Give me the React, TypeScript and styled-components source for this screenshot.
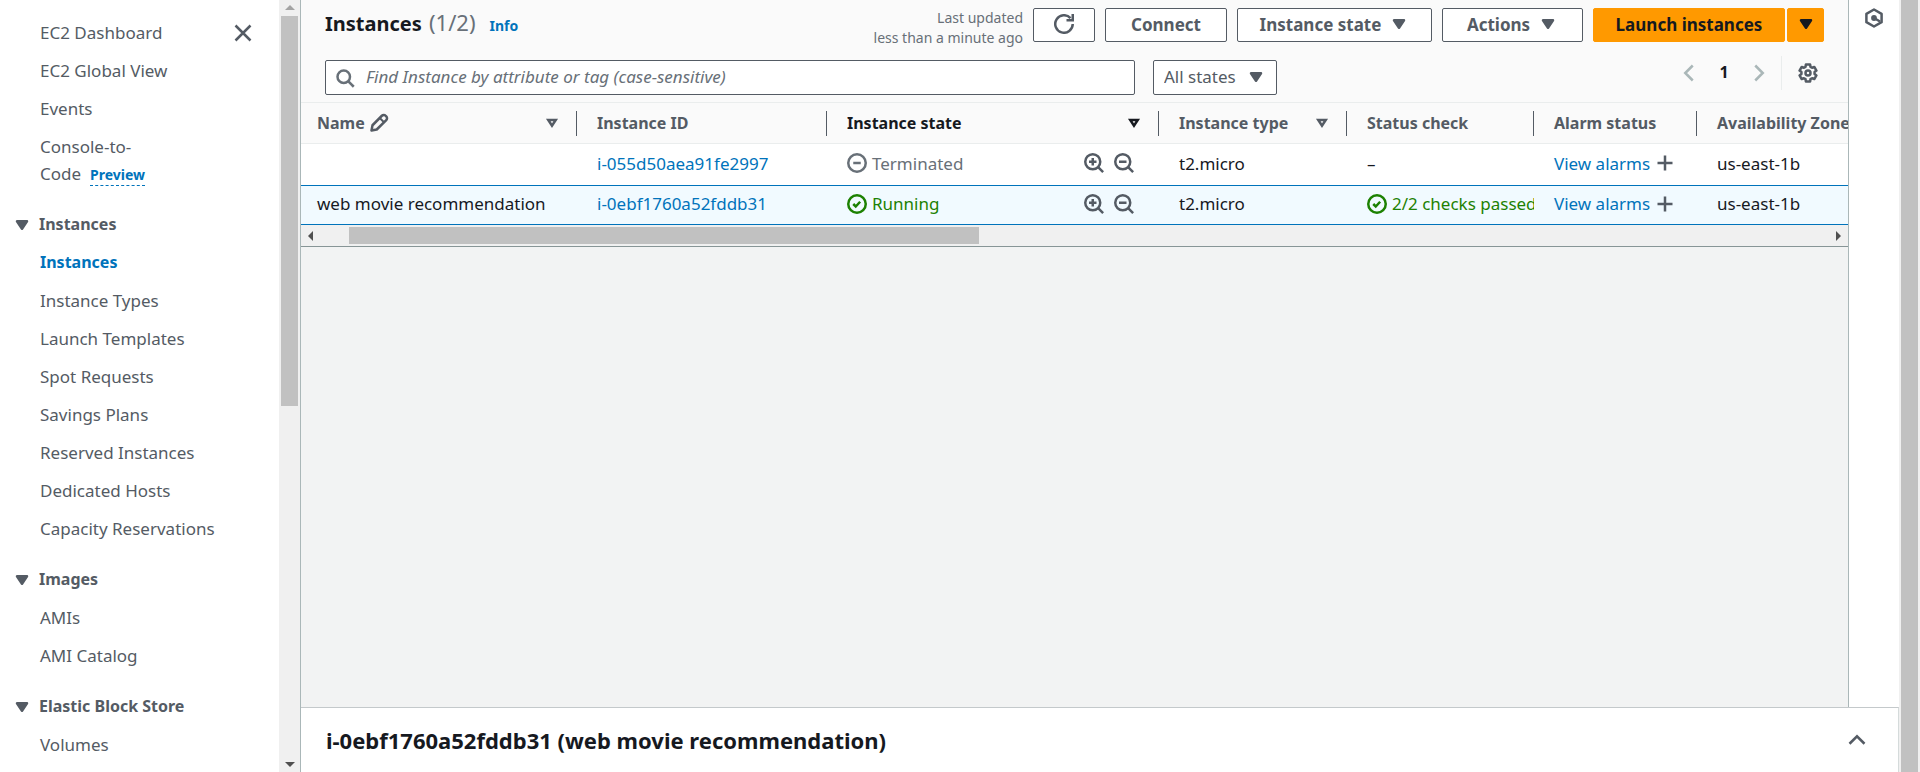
import React from "react";
import styled, { createGlobalStyle, css } from "styled-components";

const c = {
  text: "#16191f",
  label: "#545b64",
  muted: "#687078",
  link: "#0073bb",
  green: "#1d8102",
  line: "#eaeded",
  track: "#f0f0f0",
  thumb: "#c1c1c1",
};

const GlobalStyle = createGlobalStyle`
  *, *::before, *::after { box-sizing: border-box; }
  body {
    margin: 0;
    background: #fff;
    color: ${c.text};
    font-family: "Noto Sans", "Open Sans", sans-serif;
    font-size: 17px;
    line-height: 27px;
  }
  button, input, select { font: inherit; color: inherit; margin: 0; }
  button { cursor: pointer; }
  a { color: ${c.link}; text-decoration: none; }
  h1, h2, h3, ul, p { margin: 0; padding: 0; font-size: inherit; list-style: none; }
`;

/* ---------- icons ---------- */

const Svg = styled.svg<{ $size?: number }>`
  display: block;
  flex: none;
  width: ${(p) => p.$size ?? 20}px;
  height: ${(p) => p.$size ?? 20}px;
  fill: none;
  stroke: currentColor;
  stroke-width: 2;
`;

const Caret = () => (
  <Svg viewBox="0 0 16 16" aria-hidden="true">
    <path d="M4 5h8l-4 6z" fill="currentColor" strokeLinejoin="round" />
  </Svg>
);
const SortIcon = () => (
  <Svg viewBox="0 0 16 16" aria-hidden="true">
    <path d="M5 5.500h6l-3 4.600z" />
  </Svg>
);
const CloseIcon = () => (
  <Svg viewBox="0 0 16 16" aria-hidden="true">
    <path d="m2 2 12 12M14 2 2 14" />
  </Svg>
);
const RefreshIcon = () => (
  <Svg viewBox="0 0 16 16" aria-hidden="true">
    <path d="M10 5h5V0" />
    <path d="M15 8a7 7 0 1 1-1.800-4.700" />
  </Svg>
);
const SearchIcon = () => (
  <Svg viewBox="0 0 16 16" aria-hidden="true">
    <circle cx="7" cy="7" r="5" />
    <path d="m15 15-4.500-4.500" />
  </Svg>
);
const EditIcon = () => (
  <Svg viewBox="0 0 16 16" aria-hidden="true" strokeLinejoin="round">
    <path d="M2 14l.8-4.200 7.500-7.600a2.100 2.100 0 0 1 3 0l.5.5a2.100 2.100 0 0 1 0 3L6.200 13.200z" />
    <path d="m8.800 4.200 3 3" strokeWidth="1.500" />
  </Svg>
);
const ZoomIcon = ({ plus }: { plus?: boolean }) => (
  <Svg viewBox="0 0 16 16" aria-hidden="true">
    <circle cx="7" cy="7" r="6" />
    <path d="m11.300 11.300 4 4M4 7h6" />
    {plus && <path d="M7 4v6" />}
  </Svg>
);
const StoppedIcon = () => (
  <Svg viewBox="0 0 16 16" aria-hidden="true">
    <circle cx="8" cy="8" r="7" />
    <path d="M11 8H5" />
  </Svg>
);
const SuccessIcon = () => (
  <Svg viewBox="0 0 16 16" aria-hidden="true">
    <circle cx="8" cy="8" r="7" />
    <path d="m5 8 2 2 3.500-3.800" />
  </Svg>
);
const PlusIcon = () => (
  <Svg viewBox="0 0 16 16" aria-hidden="true">
    <path d="M8 2v12M2 8h12" />
  </Svg>
);
const Angle = ({ d }: { d: string }) => (
  <Svg viewBox="0 0 16 16" aria-hidden="true">
    <path d={d} />
  </Svg>
);

/* Outline of a gear with six teeth, the first one pointing up. */
const gearPoints = [0, 60, 120, 180, 240, 300]
  .flatMap((tooth) =>
    [[-14, 7], [14, 7], [22, 5.3], [38, 5.3]].map(([offset, radius]) => {
      const a = ((tooth + offset - 90) * Math.PI) / 180;
      return `${(8 + radius * Math.cos(a)).toFixed(2)},${(8 + radius * Math.sin(a)).toFixed(2)}`;
    })
  )
  .join(" ");

const GearIcon = () => (
  <Svg viewBox="0 0 16 16" aria-hidden="true" strokeLinejoin="round">
    <polygon points={gearPoints} />
    <circle cx="8" cy="8" r="2" />
  </Svg>
);
const HexIcon = () => (
  <Svg viewBox="0 0 20 20" aria-hidden="true" strokeLinejoin="round">
    <g strokeWidth="2.500">
      <path d="M10 1.500 17.600 5.800v8.400L10 18.500l-7.600-4.300V5.800z" />
      <path d="m10 10 6 3.500" />
    </g>
    <circle cx="10" cy="10" r="2.900" fill="currentColor" stroke="none" />
  </Svg>
);
const Arrow = ({ dir, color = "#505050" }: { dir: "up" | "down" | "left" | "right"; color?: string }) => {
  const d = { up: "M0 7 5 2l5 5z", down: "M0 3h10L5 8z", left: "M7 0v10L2 5z", right: "M3 0v10l5-5z" }[dir];
  return (
    <Svg $size={10} viewBox="0 0 10 10" aria-hidden="true">
      <path d={d} fill={color} stroke="none" />
    </Svg>
  );
};

/* ---------- frame ---------- */

const Shell = styled.div`
  display: flex;
  min-height: 100vh;
`;
const Sidebar = styled.nav`
  flex: none;
  width: 279px;
  padding: 19px 26px 14px 15px;
  display: flex;
  align-items: flex-start;
  justify-content: space-between;
  color: ${c.label};
`;
const VScroll = styled.div`
  flex: none;
  width: 21px;
  padding: 0 2px;
  background: ${c.track};
  display: flex;
  flex-direction: column;
  align-items: center;
`;
const VCap = styled.div`
  height: 16px;
  display: flex;
  align-items: center;
`;
const VTrack = styled.div`
  flex: 1;
  width: 100%;
`;
const VThumb = styled.div<{ $h: string }>`
  height: ${(p) => p.$h};
  background: ${c.thumb};
`;
const Center = styled.div`
  flex: 1;
  min-width: 0;
  display: flex;
  flex-direction: column;
  border-left: 1px solid #aab7b8;
`;
const Upper = styled.div`
  flex: 1;
  display: flex;
`;
const Main = styled.main`
  flex: 1;
  min-width: 0;
  background: #f2f3f3;
`;
const Rail = styled.aside`
  flex: none;
  width: 51px;
  padding: 8px 15px;
  border-left: 1px solid #aab7b8;
  color: ${c.label};
`;
const IconButton = styled.button<{ $tone?: string }>`
  padding: 0;
  border: 0;
  background: none;
  color: ${(p) => p.$tone ?? c.label};
`;

/* ---------- navigation ---------- */

const NavList = styled.ul`
  display: flex;
  flex-direction: column;
  gap: 11px;
  padding-left: 25px;
`;
const NavLink = styled.a<{ $active?: boolean }>`
  display: block;
  color: ${(p) => (p.$active ? c.link : c.label)};
  font-size: ${(p) => (p.$active ? 16 : 17)}px;
  font-weight: ${(p) => (p.$active ? 700 : 400)};
`;
const NavHeading = styled.h3`
  display: flex;
  align-items: center;
  margin: 24px 0 11px -3px;
  gap: 7px;
  font-size: 16px;
  font-weight: 700;
`;
const Preview = styled.span`
  display: inline-block;
  margin-left: 9px;
  color: ${c.link};
  font-size: 14px;
  font-weight: 700;
  line-height: 20px;
  border-bottom: 1px dashed ${c.link};
`;
const CloseWrap = styled.div`
  padding-top: 4px;
`;

const sections = [
  {
    title: "Instances",
    items: ["Instances", "Instance Types", "Launch Templates", "Spot Requests", "Savings Plans", "Reserved Instances", "Dedicated Hosts", "Capacity Reservations"],
  },
  { title: "Images", items: ["AMIs", "AMI Catalog"] },
  { title: "Elastic Block Store", items: ["Volumes"] },
];

/* ---------- toolbar ---------- */

const Header = styled.header`
  padding: 8px 24px 7px;
  background: #fafafa;
  border-bottom: 1px solid ${c.line};
`;
const TitleRow = styled.div`
  display: flex;
  align-items: center;
  gap: 10px;
`;
const Title = styled.h1`
  margin-right: auto;
  font-size: 20px;
  font-weight: 700;
  line-height: 24px;
  padding-bottom: 3px;
`;
const Count = styled.span`
  margin-left: 2px;
  color: ${c.muted};
  font-size: 22px;
  font-weight: 400;
`;
const Info = styled.a`
  margin-left: 14px;
  font-size: 14px;
`;
const Updated = styled.p`
  text-align: right;
  font-size: 14px;
  line-height: 20px;
  height: 34px;
  color: ${c.muted};
`;
const Button = styled.button<{ $w: number; $primary?: boolean }>`
  display: flex;
  align-items: center;
  justify-content: center;
  gap: 8px;
  width: ${(p) => p.$w}px;
  height: 34px;
  padding: 0 0 2px;
  border: 1px solid ${c.label};
  border-radius: 2px;
  background: #fff;
  color: ${c.label};
  font-weight: 700;
  white-space: nowrap;
  ${(p) =>
    p.$primary &&
    css`
      border-color: #ff9900;
      background: #ff9900;
      color: ${c.text};
    `}
`;
const Split = styled.div`
  display: flex;
  gap: 2px;
`;
const FilterRow = styled.div`
  display: flex;
  align-items: center;
  gap: 18px;
  margin-top: 18px;
`;
const SearchBox = styled.label`
  flex: 0 1 810px;
  display: flex;
  align-items: center;
  gap: 11px;
  height: 35px;
  padding: 0 9px;
  border: 1px solid ${c.label};
  border-radius: 2px;
  background: #fff;
  color: ${c.muted};
`;
const SearchInput = styled.input`
  flex: 1;
  min-width: 0;
  height: 31px;
  padding: 0 0 2px;
  border: 0;
  outline: 0;
  background: none;
  &::placeholder {
    color: ${c.muted};
    font-style: italic;
    opacity: 1;
  }
`;
const SelectBox = styled.div`
  display: grid;
  align-items: center;
  width: 124px;
  height: 35px;
  padding-bottom: 2px;
  border: 1px solid ${c.label};
  border-radius: 2px;
  background: #fff;
  color: ${c.label};
  > * {
    grid-area: 1 / 1;
  }
  > svg {
    justify-self: end;
    margin-right: 10px;
    pointer-events: none;
  }
`;
const Select = styled.select`
  appearance: none;
  width: 100%;
  height: 31px;
  padding: 0 36px 0 10px;
  border: 0;
  background: none;
`;
const Pager = styled.div`
  display: flex;
  align-items: center;
  align-self: flex-start;
  height: 35px;
  margin: -5px 6px 0 auto;
  gap: 16px;
`;
const PageNo = styled.span`
  width: 18px;
  text-align: center;
  font-size: 16px;
  font-weight: 700;
`;
const Divider = styled.span`
  width: 1px;
  height: 34px;
  background: ${c.line};
  margin-left: -4px;
`;

/* ---------- table ---------- */

const TableWrap = styled.div`
  overflow: hidden;
`;
const Table = styled.table`
  table-layout: fixed;
  width: 1636px;
  border-collapse: separate;
  border-spacing: 0;
  background: #fff;
`;
const Th = styled.th<{ $dark?: boolean }>`
  height: 41px;
  padding: 0;
  background: #fafafa;
  border-bottom: 1px solid ${c.line};
  color: ${(p) => (p.$dark ? c.text : c.label)};
  text-align: left;
  font-size: 16px;
  font-weight: 700;
  white-space: nowrap;
`;
const ThInner = styled.div<{ $first?: boolean }>`
  display: flex;
  align-items: center;
  justify-content: space-between;
  height: 25px;
  padding: 0 14px 0 ${(p) => (p.$first ? 16 : 20)}px;
  border-right: 1px solid ${c.label};
`;
const ThLabel = styled.span`
  display: flex;
  align-items: center;
  gap: 4px;
`;
const Tr = styled.tr<{ $selected?: boolean }>`
  td {
    height: 41px;
    padding: 0 0 3px 20px;
    white-space: nowrap;
    overflow: hidden;
  }
  td:first-child {
    padding-left: 16px;
  }
  ${(p) =>
    p.$selected &&
    css`
      td {
        height: 40px;
        background: #f1faff;
        border-top: 1px solid ${c.link};
        border-bottom: 1px solid ${c.link};
      }
    `}
`;
const Cell = styled.div<{ $tone?: string; $between?: boolean }>`
  display: flex;
  align-items: center;
  justify-content: ${(p) => (p.$between ? "space-between" : "flex-start")};
  gap: 5px;
  color: ${(p) => p.$tone ?? "inherit"};
`;
const ZoomPair = styled.div`
  display: flex;
  gap: 10px;
  padding-right: 25px;
`;
const HScroll = styled.div`
  display: flex;
  align-items: center;
  height: 22px;
  padding: 0 5px;
  background: ${c.track};
  border-bottom: 1px solid #879596;
`;
const HTrack = styled.div`
  flex: 1;
  padding-left: 33px;
`;
const HThumb = styled.div`
  width: calc(100% * 14 / 33);
  height: 17px;
  background: ${c.thumb};
`;

const columns = [
  { label: "Name", w: 276, sort: true, edit: true },
  { label: "Instance ID", w: 250 },
  { label: "Instance state", w: 332, sort: true, dark: true },
  { label: "Instance type", w: 188, sort: true },
  { label: "Status check", w: 187 },
  { label: "Alarm status", w: 163 },
  { label: "Availability Zone", w: 240 },
];
const rows = [
  { name: "", id: "i-055d50aea91fe2997", running: false },
  { name: "web movie recommendation", id: "i-0ebf1760a52fddb31", running: true },
];

/* ---------- details panel ---------- */

const Details = styled.section`
  display: flex;
  align-items: center;
  justify-content: space-between;
  height: 65px;
  padding: 0 31px 0 25px;
  border-top: 1px solid #c4c9cb;
  border-right: 1px solid #d5dbdb;
  background: #fff;
`;
const DetailsTitle = styled.h2`
  font-size: 22px;
  font-weight: 700;
`;

export default function App() {
  return (
    <>
      <GlobalStyle />
      <Shell>
        <Sidebar aria-label="EC2">
          <div>
            <NavList>
              <li><NavLink href="#">EC2 Dashboard</NavLink></li>
              <li><NavLink href="#">EC2 Global View</NavLink></li>
              <li><NavLink href="#">Events</NavLink></li>
              <li>
                <NavLink href="#">
                  Console-to-
                  <br />
                  Code<Preview>Preview</Preview>
                </NavLink>
              </li>
            </NavList>
            {sections.map((s) => (
              <div key={s.title}>
                <NavHeading><Caret />{s.title}</NavHeading>
                <NavList>
                  {s.items.map((item) => (
                    <li key={item}>
                      <NavLink href="#" $active={item === "Instances"}>{item}</NavLink>
                    </li>
                  ))}
                </NavList>
              </div>
            ))}
          </div>
          <CloseWrap><IconButton aria-label="Close navigation"><CloseIcon /></IconButton></CloseWrap>
        </Sidebar>
        <VScroll>
          <VCap><Arrow dir="up" color="#a3a3a3" /></VCap>
          <VTrack><VThumb $h="390px" /></VTrack>
          <VCap><Arrow dir="down" /></VCap>
        </VScroll>
        <Center>
          <Upper>
            <Main>
              <Header>
                <TitleRow>
                  <Title>
                    Instances <Count>(1/2)</Count>
                    <Info href="#">Info</Info>
                  </Title>
                  <Updated>Last updated<br />less than a minute ago</Updated>
                  <Button $w={62} aria-label="Refresh"><RefreshIcon /></Button>
                  <Button $w={122}>Connect</Button>
                  <Button $w={195}>Instance state <Caret /></Button>
                  <Button $w={141}>Actions <Caret /></Button>
                  <Split>
                    <Button $w={192} $primary>Launch instances</Button>
                    <Button $w={37} $primary aria-label="More launch options"><Caret /></Button>
                  </Split>
                </TitleRow>
                <FilterRow>
                  <SearchBox>
                    <SearchIcon />
                    <SearchInput type="text" aria-label="Find Instance" placeholder="Find Instance by attribute or tag (case-sensitive)" />
                  </SearchBox>
                  <SelectBox>
                    <Select aria-label="State filter"><option>All states</option></Select>
                    <Caret />
                  </SelectBox>
                  <Pager>
                    <IconButton $tone="#aab7b8" aria-label="Previous page"><Angle d="M11 2 5 8l6 6" /></IconButton>
                    <PageNo>1</PageNo>
                    <IconButton $tone="#aab7b8" aria-label="Next page"><Angle d="m5 2 6 6-6 6" /></IconButton>
                    <Divider />
                    <IconButton aria-label="Preferences"><GearIcon /></IconButton>
                  </Pager>
                </FilterRow>
              </Header>
              <TableWrap>
                <Table>
                  <colgroup>
                    {columns.map((col) => <col key={col.label} width={col.w} />)}
                  </colgroup>
                  <thead>
                    <tr>
                      {columns.map((col, i) => (
                        <Th key={col.label} $dark={col.dark} scope="col">
                          <ThInner $first={i === 0}>
                            <ThLabel>{col.label}{col.edit && <EditIcon />}</ThLabel>
                            {col.sort && <SortIcon />}
                          </ThInner>
                        </Th>
                      ))}
                    </tr>
                  </thead>
                  <tbody>
                    {rows.map((r) => (
                      <Tr key={r.id} $selected={r.running}>
                        <td>{r.name}</td>
                        <td><a href="#">{r.id}</a></td>
                        <td>
                          <Cell $between>
                            <Cell $tone={r.running ? c.green : c.muted}>
                              {r.running ? <SuccessIcon /> : <StoppedIcon />}
                              {r.running ? "Running" : "Terminated"}
                            </Cell>
                            <ZoomPair>
                              <IconButton aria-label="Include in filter"><ZoomIcon plus /></IconButton>
                              <IconButton aria-label="Exclude from filter"><ZoomIcon /></IconButton>
                            </ZoomPair>
                          </Cell>
                        </td>
                        <td>t2.micro</td>
                        <td>
                          {r.running ? <Cell $tone={c.green}><SuccessIcon />2/2 checks passed</Cell> : "–"}
                        </td>
                        <td>
                          <Cell>
                            <a href="#">View alarms</a>
                            <IconButton aria-label="Add alarm"><PlusIcon /></IconButton>
                          </Cell>
                        </td>
                        <td>us-east-1b</td>
                      </Tr>
                    ))}
                  </tbody>
                </Table>
              </TableWrap>
              <HScroll>
                <Arrow dir="left" />
                <HTrack><HThumb /></HTrack>
                <Arrow dir="right" />
              </HScroll>
            </Main>
            <Rail><IconButton aria-label="Open tools"><HexIcon /></IconButton></Rail>
          </Upper>
          <Details>
            <DetailsTitle>i-0ebf1760a52fddb31 (web movie recommendation)</DetailsTitle>
            <IconButton aria-label="Expand details"><Angle d="m2 11 6-6 6 6" /></IconButton>
          </Details>
        </Center>
        <VScroll>
          <VTrack><VThumb $h="100%" /></VTrack>
        </VScroll>
      </Shell>
    </>
  );
}
